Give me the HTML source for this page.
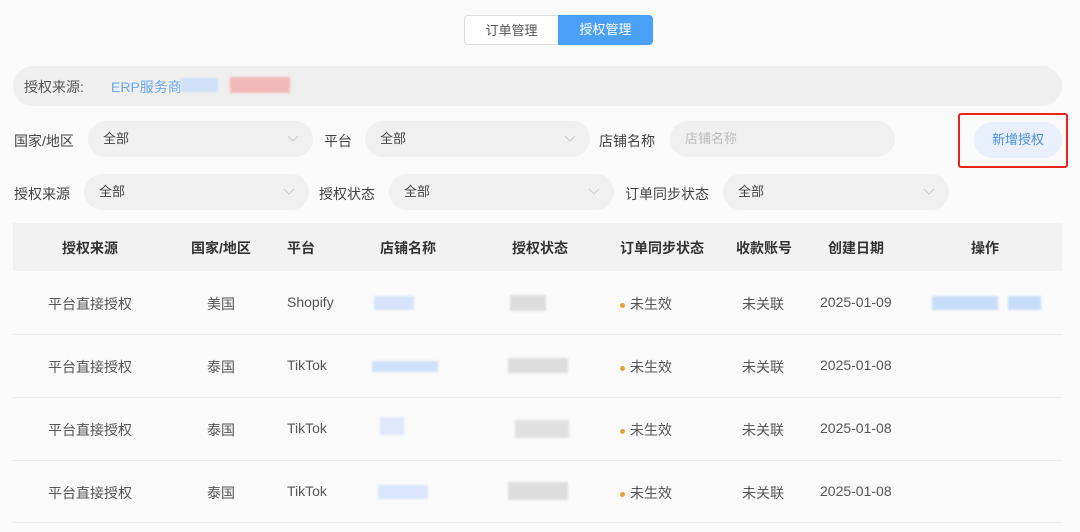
<!DOCTYPE html>
<html><head><meta charset="utf-8"><style>
body{margin:0;width:1080px;height:532px;background:#fafafa;font-family:"Liberation Sans","Noto Sans CJK SC",sans-serif;position:relative;overflow:hidden;color:#333}
.a{position:absolute}
.tab{top:15px;height:30px;line-height:30px;text-align:center;font-size:13px;box-sizing:border-box}
.lbl{font-size:14px;color:#444}
.sel{background:#f0f0f0;border-radius:18px;height:36px;line-height:36px;font-size:13px;color:#444;box-sizing:border-box;padding-left:15px}
.sel svg{position:absolute;right:14px;top:14px}
.th{font-size:14px;font-weight:bold;color:#333;top:238px}
.td{font-size:14px;color:#555}
.line{left:13px;width:1049px;height:1px;background:#ececf0}
.blur{position:absolute;height:10px;filter:blur(1px)}
.dot{display:inline-block;width:5px;height:5px;border-radius:50%;background:#e6a23c;margin-right:5px;vertical-align:middle}
</style></head><body>
<div class="a tab" style="left:464px;width:95px;border:1px solid #ddd;border-radius:4px 0 0 4px;background:#fff;color:#555">订单管理</div>
<div class="a tab" style="left:558px;width:95px;background:#4aa0f7;color:#fff;border-radius:0 4px 4px 0">授权管理</div>

<div class="a" style="left:13px;top:66px;width:1049px;height:40px;background:#efefef;border-radius:20px"></div>
<div class="a lbl" style="left:24px;top:77px;color:#555">授权来源:</div>
<div class="a" style="left:111px;top:77px;font-size:14px;color:#6aa8ea">ERP服务商</div>
<div class="blur" style="left:180px;top:78px;width:38px;height:14px;background:#cfe0f7"></div>
<div class="blur" style="left:230px;top:77px;width:60px;height:16px;background:#f2b8b8"></div>

<div class="a lbl" style="left:14px;top:131px">国家/地区</div>
<div class="a sel" style="left:88px;top:121px;width:225px">全部<svg width="12" height="8"><path d="M1 1l5 5 5-5" fill="none" stroke="#ccc"/></svg></div>
<div class="a lbl" style="left:324px;top:131px">平台</div>
<div class="a sel" style="left:365px;top:121px;width:225px">全部<svg width="12" height="8"><path d="M1 1l5 5 5-5" fill="none" stroke="#ccc"/></svg></div>
<div class="a lbl" style="left:599px;top:131px">店铺名称</div>
<div class="a sel" style="left:670px;top:121px;width:225px;color:#bbb">店铺名称</div>
<div class="a" style="left:958px;top:113px;width:106px;height:51px;border:2px solid #e8231c;border-radius:3px"></div>
<div class="a" style="left:974px;top:122px;width:88px;height:36px;line-height:36px;text-align:center;background:#e9f0fb;border-radius:18px;color:#4a90e2;font-size:13px">新增授权</div>

<div class="a lbl" style="left:14px;top:184px">授权来源</div>
<div class="a sel" style="left:84px;top:174px;width:225px">全部<svg width="12" height="8"><path d="M1 1l5 5 5-5" fill="none" stroke="#ccc"/></svg></div>
<div class="a lbl" style="left:319px;top:184px">授权状态</div>
<div class="a sel" style="left:389px;top:174px;width:225px">全部<svg width="12" height="8"><path d="M1 1l5 5 5-5" fill="none" stroke="#ccc"/></svg></div>
<div class="a lbl" style="left:625px;top:184px">订单同步状态</div>
<div class="a sel" style="left:723px;top:174px;width:226px">全部<svg width="12" height="8"><path d="M1 1l5 5 5-5" fill="none" stroke="#ccc"/></svg></div>

<div class="a" style="left:13px;top:223px;width:1049px;height:48px;background:#f2f2f3"></div>
<div class="a th" style="left:62px">授权来源</div>
<div class="a th" style="left:191px">国家/地区</div>
<div class="a th" style="left:287px">平台</div>
<div class="a th" style="left:380px">店铺名称</div>
<div class="a th" style="left:512px">授权状态</div>
<div class="a th" style="left:620px">订单同步状态</div>
<div class="a th" style="left:736px">收款账号</div>
<div class="a th" style="left:828px">创建日期</div>
<div class="a th" style="left:971px">操作</div>

<div class="a line" style="top:334px"></div>
<div class="a line" style="top:397px"></div>
<div class="a line" style="top:460px"></div>
<div class="a line" style="top:522px"></div>

<!-- rows -->
<div class="a td" style="left:48px;top:294px">平台直接授权</div><div class="a td" style="left:207px;top:294px">美国</div><div class="a td" style="left:287px;top:294px">Shopify</div>
<div class="a td" style="left:48px;top:357px">平台直接授权</div><div class="a td" style="left:207px;top:357px">泰国</div><div class="a td" style="left:287px;top:357px">TikTok</div>
<div class="a td" style="left:48px;top:420px">平台直接授权</div><div class="a td" style="left:207px;top:420px">泰国</div><div class="a td" style="left:287px;top:420px">TikTok</div>
<div class="a td" style="left:48px;top:483px">平台直接授权</div><div class="a td" style="left:207px;top:483px">泰国</div><div class="a td" style="left:287px;top:483px">TikTok</div>

<div class="a td" style="left:620px;top:294px"><span class="dot"></span>未生效</div><div class="a td" style="left:742px;top:294px">未关联</div><div class="a td" style="left:820px;top:294px">2025-01-09</div>
<div class="a td" style="left:620px;top:357px"><span class="dot"></span>未生效</div><div class="a td" style="left:742px;top:357px">未关联</div><div class="a td" style="left:820px;top:357px">2025-01-08</div>
<div class="a td" style="left:620px;top:420px"><span class="dot"></span>未生效</div><div class="a td" style="left:742px;top:420px">未关联</div><div class="a td" style="left:820px;top:420px">2025-01-08</div>
<div class="a td" style="left:620px;top:483px"><span class="dot"></span>未生效</div><div class="a td" style="left:742px;top:483px">未关联</div><div class="a td" style="left:820px;top:483px">2025-01-08</div>

<div class="blur" style="left:374px;top:296px;width:40px;height:14px;background:#d5e4fa"></div>
<div class="blur" style="left:510px;top:295px;width:36px;height:16px;background:#ddd"></div>
<div class="blur" style="left:932px;top:296px;width:66px;height:14px;background:#c8ddfa"></div>
<div class="blur" style="left:1008px;top:296px;width:33px;height:14px;background:#c8ddfa"></div>
<div class="blur" style="left:372px;top:361px;width:66px;height:11px;background:#cfe0fa"></div>
<div class="blur" style="left:508px;top:358px;width:60px;height:15px;background:#ddd"></div>
<div class="blur" style="left:380px;top:417px;width:24px;height:18px;background:#dfe8fa"></div>
<div class="blur" style="left:515px;top:420px;width:54px;height:18px;background:#e0e0e0"></div>
<div class="blur" style="left:378px;top:485px;width:50px;height:14px;background:#d8e5fa"></div>
<div class="blur" style="left:508px;top:482px;width:60px;height:18px;background:#ddd"></div>
</body></html>
